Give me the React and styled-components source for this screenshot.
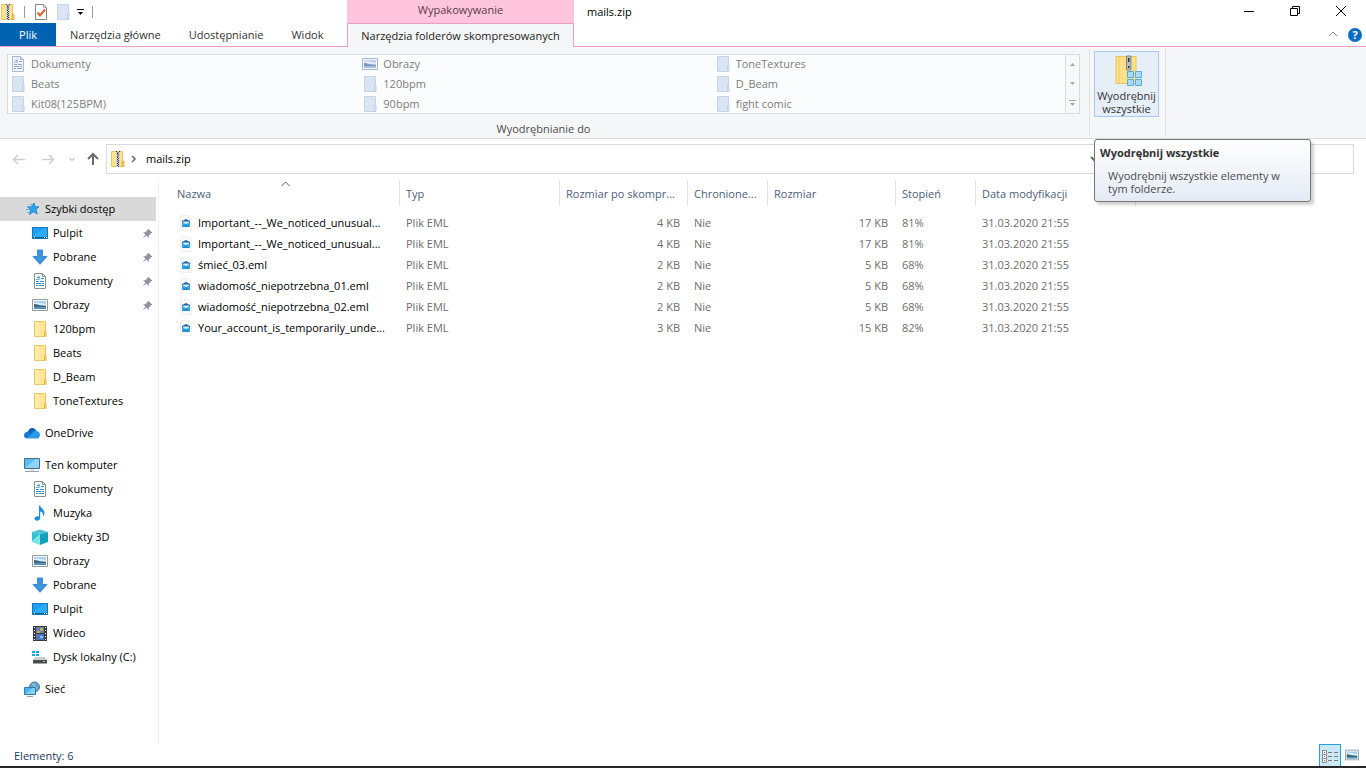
import React from "react";
import styled, { createGlobalStyle } from "styled-components";

const GlobalStyle = createGlobalStyle`
  * {
    box-sizing: border-box;
  }
  body {
    margin: 0;
    background: #fff;
    color: #000;
    font-family: "Open Sans", "Noto Sans", sans-serif;
    font-size: 11px;
    line-height: 16px;
  }
  button,
  input {
    font: inherit;
    color: inherit;
    border: 0;
    padding: 0;
    margin: 0;
    background: none;
  }
  svg {
    display: block;
    flex: none;
  }
`;

/* ---------- icons ---------- */

const Svg = ({ size = 16, children }) => (
  <svg width={size} height={size} viewBox="0 0 16 16" aria-hidden="true">
    {children}
  </svg>
);

const FolderIcon = () => (
  <Svg>
    <path d="M2.500 .5h11v15h-11z" fill="#ffe596" stroke="#e9c65c" />
    <path d="M3 1h5v14H3z" fill="#ffeaa8" />
    <path d="M12.500 15.500v-5h1.500v5z" fill="#f9d978" stroke="#e2b84a" />
  </Svg>
);

const FolderOffIcon = () => (
  <Svg>
    <path d="M2.500 .5h11v15h-11z" fill="#dae5f4" stroke="#c6d4e8" />
    <path d="M12.500 15.500v-6h1.500v6z" fill="#e8eff9" stroke="#c0cfe5" />
  </Svg>
);

const ZipIcon = () => (
  <Svg>
    <path d="M1.500 .5h11v15h-11z" fill="#ffe48f" stroke="#e8c460" />
    <path d="M12 15.500v-5h2v5z" fill="#f8d466" stroke="#e0b040" />
    <path d="M6 0h4v16H6z" fill="#d2d2d2" />
    <path d="M7 1h2v5H7z" fill="#8a8a8a" />
    <path
      d="M6 0h1v1H6zM9 0h1v1H9zM7 6h1v1H7zM8 7h1v1H8zM7 8h1v1H7zM8 9h1v1H8zM7 10h1v1H7zM8 11h1v1H8zM7 12h1v1H7zM8 13h1v1H8zM7 14h1v1H7zM8 15h1v1H8zM7 2h1v1H7z"
      fill="#3c3c3c"
    />
  </Svg>
);

const DocIcon = ({ off }) => (
  <Svg>
    <path
      d="M2.500 .5h8l3 3v12h-11z"
      fill={off ? "#f1f5fb" : "#fff"}
      stroke={off ? "#a9b9d6" : "#8a8f94"}
    />
    <path d="M10.500 .5v3h3" fill="none" stroke={off ? "#a9b9d6" : "#8a8f94"} />
    <path
      d="M4 6.500h1.500M5 4.500h2M7 3v4M9 5.500h3M4 8.500h3M8 8.500h4M4 10.500h5M10 10.500h2M4 12.500h2M7 12.500h5"
      stroke={off ? "#8fa8cf" : "#2f8fd0"}
      fill="none"
    />
  </Svg>
);

const PictureIcon = ({ off, size }) => (
  <Svg size={size}>
    <path
      d="M.5 2.500h15v11H.5z"
      fill={off ? "#f4f7fc" : "#fff"}
      stroke={off ? "#a4b6d6" : "#94989c"}
    />
    <path d="M2 4h12v8H2z" fill={off ? "#c3d2ea" : "#a5cdee"} />
    <path d="M2 6l4-1 3 1 5 1v1H2z" fill={off ? "#e3ebf7" : "#dceefb"} />
    <path d="M2 7c3 0 5 1.500 12 2v1.500H2z" fill={off ? "#7f97c2" : "#3d6a75"} />
    <path d="M2 10.500h12V12H2z" fill={off ? "#adc0df" : "#4a8ec2"} />
  </Svg>
);

const StarIcon = () => (
  <Svg>
    <path
      d="M10 2l1.200 3.700 3.800.1-3 2.600 1.200 4.600-3.700-2.200-4 2.700 1.200-4.700-3-2.700 4-.4z"
      fill="#2ea3ea"
      stroke="#1b7fc4"
      strokeWidth=".8"
    />
    <path d="M3 5.500h4M2 8.500h4M3 11.500h3M6 3.500h3" stroke="#4bb4ef" />
  </Svg>
);

const DesktopIcon = () => (
  <Svg>
    <path d="M.5 2.500h15v11H.5z" fill="#1ea0f5" stroke="#1573b8" />
    <path d="M1 11L13 3h2v9H1z" fill="#3cb4ff" opacity=".5" />
    <path d="M1 12h14v1H1z" fill="#0b5c9c" />
    <path d="M2 12h1v1H2zM12 12h1v1h-1zM14 12h1v1h-1z" fill="#fff" />
  </Svg>
);

const DownloadIcon = () => (
  <Svg>
    <path d="M5.500 1h5v6.500h4.500L8 15.300 1 7.500h4.500z" fill="#3a95de" stroke="#2a7cc4" strokeWidth=".8" />
  </Svg>
);

const CloudIcon = () => (
  <Svg>
    <path d="M3.500 8.500C3.800 5 5.800 3 8.200 3c2 0 3.500 1 4.200 3l-4 4z" fill="#0b63b5" />
    <path d="M0 10.500C0 8 2 6.700 4 6.800c1.500 0 2.500.7 5 2.200l-6 4.500C1 13.200 0 12 0 10.500z" fill="#1478d0" />
    <path d="M8 8.500c1-2.500 3-3.200 4.800-2.500C15 6.500 16 8.300 16 10c0 2-1.300 3.500-3 3.500H3z" fill="#2a9ae8" />
  </Svg>
);

const ComputerIcon = () => (
  <Svg>
    <path d="M.5 1.500h15v10H.5z" fill="#5bbcf7" stroke="#4a6d86" />
    <path d="M1 11L12 2h3v9z" fill="#8fd3fb" />
    <path d="M6 12h4v2H6z" fill="#dbe2e6" />
    <path d="M1 14.500h14" stroke="#8fa0ac" />
  </Svg>
);

const MusicIcon = () => (
  <Svg>
    <path
      d="M7 .5h1.200C8.500 3 12.500 4.500 12.500 8c0 1.500-.5 2.500-1.300 3.500.3-3-1.200-4.500-3-5V13c0 1.700-1.500 2.700-3.200 2.700S2.500 14.800 2.500 13.500s1.500-2.300 3-2.300c.6 0 1 .1 1.500.3z"
      fill="#1b90dd"
    />
  </Svg>
);

const CubeIcon = () => (
  <Svg>
    <path d="M0 3l8-2.500L16 3 8 5z" fill="#4cc3d3" />
    <path d="M0 3l8 2v11l-8-3z" fill="#7fe3ee" />
    <path d="M0 3l8 2-8 7z" fill="#35bfd3" />
    <path d="M8 5l8-2v10l-8 3z" fill="#12a0ba" />
  </Svg>
);

const VideoIcon = () => (
  <Svg>
    <path d="M1 1h14v15H1z" fill="#3a3a3a" />
    <path d="M4 2h8v6H4z" fill="#5f7fb8" />
    <path d="M4 9h8v6H4z" fill="#4a78c0" />
    <path d="M8 3h3v3H8zM5 6h3v2H5z" fill="#d7a33c" />
    <path d="M8 11h3v2H8z" fill="#9bc2ea" />
    <path
      d="M2 2h1v1H2zM2 5h1v1H2zM2 8h1v1H2zM2 11h1v1H2zM2 14h1v1H2zM13 2h1v1h-1zM13 5h1v1h-1zM13 8h1v1h-1zM13 11h1v1h-1zM13 14h1v1h-1z"
      fill="#fff"
    />
  </Svg>
);

const DiskIcon = () => (
  <Svg>
    <path d="M0 2h3v2H0zM4 2h3v2H4zM0 5h3v2H0zM4 5h3v2H4z" fill="#17a9e6" />
    <path d="M3 8h10l2 3H1z" fill="#c9ccce" />
    <path d="M1 11h14v3.500H1z" fill="#4a4d50" />
    <path d="M11 12h2v1h-2z" fill="#58e04a" />
  </Svg>
);

const NetworkIcon = () => (
  <Svg>
    <circle cx="10.500" cy="6" r="5" fill="#6ba4c9" stroke="#3f7ba6" />
    <path d="M8 3l3 1-1 2 3 1" fill="none" stroke="#a9cfe4" />
    <path d="M.5 6.500h11v7H.5z" fill="#4ab3f4" stroke="#2c7cb4" />
    <path d="M1 13l8-6h2v6z" fill="#86cffa" />
    <path d="M3 15.500h6" stroke="#8ca6b8" />
  </Svg>
);

const PinIcon = () => (
  <Svg size={11}>
    <path d="M9 1l6 6-2 1-3 3-.5 3.500L6.500 11 1 15l4-5.500L1.500 6.500 5 6l3-3z" fill="#8a939b" />
  </Svg>
);

const MailIcon = () => (
  <Svg>
    <path d="M2.500 .5h8l3 3v12h-11z" fill="#fafafa" stroke="#f0f0f0" />
    <path d="M4 6l4-2 4 2v2H4z" fill="#1b64a8" />
    <path d="M5 6.500h6V8H5z" fill="#d9ecf8" />
    <path d="M4 7l4 2 4-2v5H4z" fill="#36a9e4" />
    <path d="M4 12l4-3 4 3z" fill="#1f8fd2" />
  </Svg>
);

const CheckPageIcon = () => (
  <Svg>
    <path d="M2.500 .5h8l3 3v12h-11z" fill="#fff" stroke="#858585" />
    <path d="M10.500 .5v3h3" fill="none" stroke="#a9a9a9" />
    <path d="M4.500 8.500l2.500 3 5-6" fill="none" stroke="#dd6035" strokeWidth="2" />
  </Svg>
);

const ExtractIcon = () => (
  <svg width="32" height="32" viewBox="0 0 32 32" aria-hidden="true">
    <path d="M5 1.500h20v27H5z" fill="#ffe08a" stroke="#eec25a" />
    <path d="M8 2v26" stroke="#f0c860" />
    <path d="M15.500 1h4.500v14h-4.500z" fill="#b9bcc0" stroke="#83878c" />
    <path d="M17 3h1.500v4H17zM17 11h1.500v2H17z" fill="#2f3337" />
    <path
      d="M16.500 16.500h6v6h-6zM24.500 16.500h6v6h-6zM16.500 24.500h6v6h-6zM24.500 24.500h6v6h-6z"
      fill="#a5dcfb"
      stroke="#5da9dc"
    />
  </svg>
);

const Glyph = ({ d, color = "#000", width = 1, size = 16 }) => (
  <Svg size={size}>
    <path d={d} fill="none" stroke={color} strokeWidth={width} />
  </Svg>
);

/* ---------- frame ---------- */

const Window = styled.div`
  display: flex;
  flex-direction: column;
  min-height: 100vh;
  border-bottom: 2px solid #262626;
`;

const Header = styled.header`
  display: flex;
  height: 47px;
`;

const HeaderSide = styled.div`
  display: flex;
  flex-direction: column;
  width: 347px;
  border-bottom: 1px solid #ee9dc4;
`;

const HeaderRest = styled(HeaderSide)`
  flex: 1;
  width: auto;
`;

const QuickBar = styled.div`
  display: flex;
  align-items: center;
  gap: 6px;
  height: 23px;
`;

const QuickButton = styled.button`
  display: flex;
`;

const QuickLine = styled.span`
  width: 1px;
  height: 12px;
  margin: 0 2px;
  background: #9a9a9a;
`;

const Tabs = styled.nav`
  display: flex;
  flex: 1;
`;

const Tab = styled.button`
  flex: none;
  padding: 0 14px;
  color: #333;
  white-space: nowrap;
`;

const FileTab = styled(Tab)`
  width: 56px;
  background: #0063b1;
  color: #fff;
`;

const Context = styled.div`
  display: flex;
  flex-direction: column;
  width: 227px;
`;

const ContextTitle = styled.div`
  height: 23px;
  padding-top: 2px;
  background: #ffc5dd;
  color: #5a3a48;
  text-align: center;
`;

const ContextTab = styled.button`
  flex: 1;
  border: 1px solid #ee9dc4;
  border-bottom: 0;
  background: #f5f6f7;
  color: #222;
  white-space: nowrap;
`;

const TitleBar = styled.div`
  display: flex;
  align-items: center;
  height: 23px;
  padding: 0 2px 0 13px;
`;

const Title = styled.h1`
  flex: 1;
  margin: 0;
  font-size: 11px;
  font-weight: 400;
`;

const WindowButton = styled.button`
  display: flex;
  justify-content: center;
  width: 46px;
  padding-bottom: 2px;
`;

const RibbonTools = styled.div`
  display: flex;
  flex: 1;
  align-items: center;
  justify-content: flex-end;
  gap: 7px;
  padding-right: 4px;
`;

const Help = styled.button`
  width: 14px;
  height: 14px;
  border-radius: 50%;
  background: #0a6cc4;
  color: #fff;
  font-weight: 700;
  line-height: 14px;
`;

/* ---------- ribbon ---------- */

const Ribbon = styled.section`
  display: flex;
  height: 92px;
  padding: 2px 200px 0 0;
  border-bottom: 1px solid #d9dbdd;
  background: #f5f6f7;
`;

const Group = styled.div`
  display: flex;
  flex: ${(p) => (p.$grow ? 1 : "none")};
  flex-direction: column;
  height: 86px;
  padding: ${(p) => (p.$grow ? "5px 9px 0 7px" : "2px 6px 0 4px")};
  border-right: 1px solid #e0e2e4;
`;

const Gallery = styled.div`
  display: flex;
  height: 60px;
  border: 1px solid #d9dcdf;
  background: #fbfcfe;
`;

const GalleryGrid = styled.div`
  display: grid;
  flex: 1;
  grid-template-columns: repeat(3, 1fr);
  grid-auto-rows: 20px;
`;

const GalleryItem = styled.button`
  display: flex;
  align-items: center;
  gap: 5px;
  height: 18px;
  padding-left: 2px;
  color: #7c7c7c;
`;

const GalleryScroll = styled.div`
  display: flex;
  flex-direction: column;
  width: 14px;
  border-left: 1px solid #d9dcdf;
  background: #f7f8f9;
`;

const ScrollButton = styled.button`
  display: flex;
  flex: 1;
  align-items: center;
  justify-content: center;
`;

const GroupLabel = styled.div`
  padding-top: 7px;
  color: #4d4d4d;
  text-align: center;
`;

const ExtractWrap = styled.div`
  position: relative;
  width: 65px;
`;

const ExtractButton = styled.button`
  display: flex;
  flex-direction: column;
  align-items: center;
  width: 100%;
  height: 66px;
  padding-top: 3px;
  border: 1px solid #a9caee;
  background: #e6eef8;
  color: #333;
  line-height: 13px;
  span {
    padding-top: 2px;
  }
`;

const Tooltip = styled.div`
  position: absolute;
  z-index: 2;
  top: 88px;
  left: 0;
  width: 217px;
  padding: 6px 20px 6px 5px;
  border: 1px solid #767676;
  border-radius: 3px;
  background: linear-gradient(#fff, #e4eaf5);
  box-shadow: 3px 3px 3px rgba(0, 0, 0, 0.18);
  color: #4c4c4c;
  line-height: 13px;
  p {
    margin: 10px 0 0 8px;
  }
  strong {
    display: block;
    color: #333;
    font-weight: 700;
  }
`;

/* ---------- address row ---------- */

const AddressRow = styled.div`
  display: flex;
  align-items: center;
  height: 41px;
  padding: 0 12px 2px 11px;
`;

const NavButtons = styled.div`
  display: flex;
  align-items: center;
  width: 95px;
`;

const NavButton = styled.button`
  display: flex;
  margin-left: ${(p) => p.$gap || 0}px;
`;

const AddressBox = styled.div`
  display: flex;
  flex: 1;
  align-items: center;
  height: 30px;
  padding: 0 18px 0 3px;
  border: 1px solid #d9d9d9;
`;

const Crumb = styled.button`
  flex: 1;
  padding-left: 4px;
  text-align: left;
`;

const Search = styled.input`
  width: 224px;
  height: 30px;
  margin-left: 8px;
  border: 1px solid #d9d9d9;
`;

/* ---------- body ---------- */

const Body = styled.div`
  display: flex;
  flex: 1;
`;

const Sidebar = styled.nav`
  width: 159px;
  padding: 17px 2px 0 0;
  border-right: 1px solid #f2f2f2;
`;

const Branch = styled.div`
  margin-bottom: 8px;
`;

const TreeLink = styled.a`
  display: flex;
  align-items: center;
  gap: 5px;
  height: 24px;
  padding: 0 3px 0 ${(p) => (p.$root ? 24 : 32)}px;
  background: ${(p) => (p.$active ? "#d9d9d9" : "transparent")};
  color: #000;
  text-decoration: none;
  white-space: nowrap;
  span {
    flex: 1;
  }
`;

const Files = styled.main`
  flex: 1;
  padding-left: 11px;
`;

const Table = styled.table`
  width: 966px;
  table-layout: fixed;
  border-spacing: 0;
  tbody::before {
    content: "";
    display: block;
    height: 6px;
  }
`;

const Th = styled.th`
  position: relative;
  height: 26px;
  padding: 2px 0 0 ${(p) => (p.$first ? 7 : 6)}px;
  border-right: 1px solid #e3e3e3;
  color: #4c607a;
  font-weight: 400;
  text-align: left;
  white-space: nowrap;
`;

const SortMark = styled.span`
  position: absolute;
  top: 1px;
  right: 109px;
`;

const Td = styled.td`
  height: 21px;
  padding: 0 8px 0 6px;
  color: #6d6d6d;
  text-align: ${(p) => (p.$right ? "right" : "left")};
  white-space: nowrap;
`;

const FileName = styled.div`
  display: flex;
  align-items: center;
  gap: 4px;
  padding-left: 2px;
  color: #000;
`;

const Status = styled.footer`
  display: flex;
  align-items: center;
  height: 22px;
  padding: 0 3px 0 14px;
  color: #1e395b;
  span {
    flex: 1;
    padding-top: 2px;
  }
`;

const ViewButton = styled.button`
  display: flex;
  align-items: center;
  justify-content: center;
  width: 22px;
  height: 22px;
  border: ${(p) => (p.$on ? "1px solid #26a0da" : "0")};
  border-bottom: 0;
  background: ${(p) => (p.$on ? "#cbe8f6" : "none")};
`;

const gallery = [
  ["Dokumenty", DocIcon],
  ["Obrazy", PictureIcon],
  ["ToneTextures", FolderOffIcon],
  ["Beats", FolderOffIcon],
  ["120bpm", FolderOffIcon],
  ["D_Beam", FolderOffIcon],
  ["Kit08(125BPM)", FolderOffIcon],
  ["90bpm", FolderOffIcon],
  ["fight comic", FolderOffIcon],
];

const tree = [
  {
    name: "Szybki dostęp",
    icon: StarIcon,
    active: true,
    items: [
      ["Pulpit", DesktopIcon, true],
      ["Pobrane", DownloadIcon, true],
      ["Dokumenty", DocIcon, true],
      ["Obrazy", PictureIcon, true],
      ["120bpm", FolderIcon],
      ["Beats", FolderIcon],
      ["D_Beam", FolderIcon],
      ["ToneTextures", FolderIcon],
    ],
  },
  { name: "OneDrive", icon: CloudIcon, items: [] },
  {
    name: "Ten komputer",
    icon: ComputerIcon,
    items: [
      ["Dokumenty", DocIcon],
      ["Muzyka", MusicIcon],
      ["Obiekty 3D", CubeIcon],
      ["Obrazy", PictureIcon],
      ["Pobrane", DownloadIcon],
      ["Pulpit", DesktopIcon],
      ["Wideo", VideoIcon],
      ["Dysk lokalny (C:)", DiskIcon],
    ],
  },
  { name: "Sieć", icon: NetworkIcon, items: [] },
];

const columns = [
  ["Nazwa", 230],
  ["Typ", 160],
  ["Rozmiar po skompr...", 128],
  ["Chronione...", 80],
  ["Rozmiar", 128],
  ["Stopień", 80],
  ["Data modyfikacji", 160],
];

const files = [
  ["Important_--_We_noticed_unusual...", "4 KB", "17 KB", "81%"],
  ["Important_--_We_noticed_unusual...", "4 KB", "17 KB", "81%"],
  ["śmieć_03.eml", "2 KB", "5 KB", "68%"],
  ["wiadomość_niepotrzebna_01.eml", "2 KB", "5 KB", "68%"],
  ["wiadomość_niepotrzebna_02.eml", "2 KB", "5 KB", "68%"],
  ["Your_account_is_temporarily_unde...", "3 KB", "15 KB", "82%"],
];

const AppHeader = () => (
  <Header>
    <HeaderSide>
      <QuickBar>
        <ZipIcon />
        <QuickLine />
        <QuickButton aria-label="Właściwości">
          <CheckPageIcon />
        </QuickButton>
        <QuickButton aria-label="Nowy folder">
          <FolderOffIcon />
        </QuickButton>
        <QuickButton aria-label="Dostosuj pasek">
          <svg width="7" height="6" viewBox="0 0 7 6">
            <path d="M0 0h7v1H0zM1 3h5L3.500 6z" />
          </svg>
        </QuickButton>
        <QuickLine />
      </QuickBar>
      <Tabs>
        <FileTab>Plik</FileTab>
        <Tab>Narzędzia główne</Tab>
        <Tab>Udostępnianie</Tab>
        <Tab>Widok</Tab>
      </Tabs>
    </HeaderSide>
    <Context>
      <ContextTitle>Wypakowywanie</ContextTitle>
      <ContextTab>Narzędzia folderów skompresowanych</ContextTab>
    </Context>
    <HeaderRest>
      <TitleBar>
        <Title>mails.zip</Title>
        <WindowButton aria-label="Minimalizuj">
          <Glyph d="M3 8.500h10" />
        </WindowButton>
        <WindowButton aria-label="Przywróć">
          <Glyph d="M3.500 5.500h7v7h-7zM5.500 5.500v-2h7v7h-2" />
        </WindowButton>
        <WindowButton aria-label="Zamknij">
          <Glyph d="M3 3l10 10M13 3L3 13" />
        </WindowButton>
      </TitleBar>
      <RibbonTools>
        <button aria-label="Zwiń wstążkę">
          <Glyph d="M4 9l4-4 4 4" color="#8a8a8a" />
        </button>
        <Help aria-label="Pomoc">?</Help>
      </RibbonTools>
    </HeaderRest>
  </Header>
);

const AppRibbon = () => (
  <Ribbon>
    <Group $grow>
      <Gallery>
        <GalleryGrid>
          {gallery.map(([name, Icon]) => (
            <GalleryItem key={name} disabled>
              <Icon off />
              {name}
            </GalleryItem>
          ))}
        </GalleryGrid>
        <GalleryScroll>
          <ScrollButton aria-label="W górę">
            <svg width="5" height="3" viewBox="0 0 5 3">
              <path d="M0 3h5L2.500 0z" fill="#a3a7ab" />
            </svg>
          </ScrollButton>
          <ScrollButton aria-label="W dół">
            <svg width="5" height="3" viewBox="0 0 5 3">
              <path d="M0 0h5L2.500 3z" fill="#a3a7ab" />
            </svg>
          </ScrollButton>
          <ScrollButton aria-label="Więcej">
            <svg width="7" height="6" viewBox="0 0 7 6">
              <path d="M0 0h7v1H0zM1 3h5L3.500 6z" fill="#a3a7ab" />
            </svg>
          </ScrollButton>
        </GalleryScroll>
      </Gallery>
      <GroupLabel>Wyodrębnianie do</GroupLabel>
    </Group>
    <Group>
      <ExtractWrap>
        <ExtractButton aria-describedby="extract-tip">
          <ExtractIcon />
          <span>
            Wyodrębnij
            <br />
            wszystkie
          </span>
        </ExtractButton>
        <Tooltip id="extract-tip" role="tooltip">
          <strong>Wyodrębnij wszystkie</strong>
          <p>Wyodrębnij wszystkie elementy w tym folderze.</p>
        </Tooltip>
      </ExtractWrap>
    </Group>
  </Ribbon>
);

const Tree = () => (
  <Sidebar>
    {tree.map(({ name, icon: RootIcon, active, items }) => (
      <Branch key={name}>
        <TreeLink href="#" $root $active={active}>
          <RootIcon />
          <span>{name}</span>
        </TreeLink>
        {items.map(([label, Icon, pinned]) => (
          <TreeLink href="#" key={label}>
            <Icon />
            <span>{label}</span>
            {pinned && <PinIcon />}
          </TreeLink>
        ))}
      </Branch>
    ))}
  </Sidebar>
);

const FileTable = () => (
  <Files>
    <Table>
      <colgroup>
        {columns.map(([name, width]) => (
          <col key={name} style={{ width }} />
        ))}
      </colgroup>
      <thead>
        <tr>
          {columns.map(([name], i) => (
            <Th key={name} $first={i === 0}>
              {name}
              {i === 0 && (
                <SortMark>
                  <svg width="9" height="6" viewBox="0 0 9 6">
                    <path d="M.5 5l4-4 4 4" fill="none" stroke="#5d5d5d" />
                  </svg>
                </SortMark>
              )}
            </Th>
          ))}
        </tr>
      </thead>
      <tbody>
        {files.map(([name, packed, size, ratio], i) => (
          <tr key={i}>
            <Td>
              <FileName>
                <MailIcon />
                {name}
              </FileName>
            </Td>
            <Td>Plik EML</Td>
            <Td $right>{packed}</Td>
            <Td>Nie</Td>
            <Td $right>{size}</Td>
            <Td>{ratio}</Td>
            <Td>31.03.2020 21:55</Td>
          </tr>
        ))}
      </tbody>
    </Table>
  </Files>
);

const App = () => (
  <>
    <GlobalStyle />
    <Window>
      <AppHeader />
      <AppRibbon />
      <AddressRow>
        <NavButtons>
          <NavButton aria-label="Wstecz">
            <Glyph d="M14 8.500H2.500M7 4L2.500 8.500 7 13" color="#cfcfcf" width={1.5} />
          </NavButton>
          <NavButton $gap={13} aria-label="Dalej">
            <Glyph d="M2 8.500h11.500M9 4l4.500 4.500L9 13" color="#cfcfcf" width={1.5} />
          </NavButton>
          <NavButton $gap={8} aria-label="Ostatnie">
            <Glyph d="M5.500 7L8 9.500 10.500 7" color="#cfcfcf" width={1.5} />
          </NavButton>
          <NavButton $gap={5} aria-label="W górę">
            <Glyph d="M8 14V3M3 8l5-5 5 5" color="#6b6b6b" width={2} />
          </NavButton>
        </NavButtons>
        <AddressBox>
          <ZipIcon />
          <Glyph d="M6 5l3 3-3 3" color="#6b6b6b" width={1.5} />
          <Crumb>mails.zip</Crumb>
          <Glyph d="M4 6l4 4 4-4" color="#6b6b6b" width={2} />
        </AddressBox>
        <Search type="search" aria-label="Przeszukaj mails.zip" />
      </AddressRow>
      <Body>
        <Tree />
        <FileTable />
      </Body>
      <Status>
        <span>Elementy: 6</span>
        <ViewButton $on aria-label="Szczegóły">
          <Svg>
            <path d="M.5 2.500h4v4h-4zM.5 6.500h4v4h-4zM.5 10.500h4v4h-4z" fill="#fff" stroke="#8b8b8b" />
            <path d="M2 4h1v1H2zM2 8h1v1H2zM2 12h1v1H2z" fill="#b8452e" />
            <path d="M6 4.500h4M12 4.500h4M6 8.500h4M12 8.500h4M6 12.500h4M12 12.500h4" stroke="#7b7b7b" />
          </Svg>
        </ViewButton>
        <ViewButton aria-label="Duże ikony">
          <PictureIcon size={14} />
        </ViewButton>
      </Status>
    </Window>
  </>
);

export default App;
